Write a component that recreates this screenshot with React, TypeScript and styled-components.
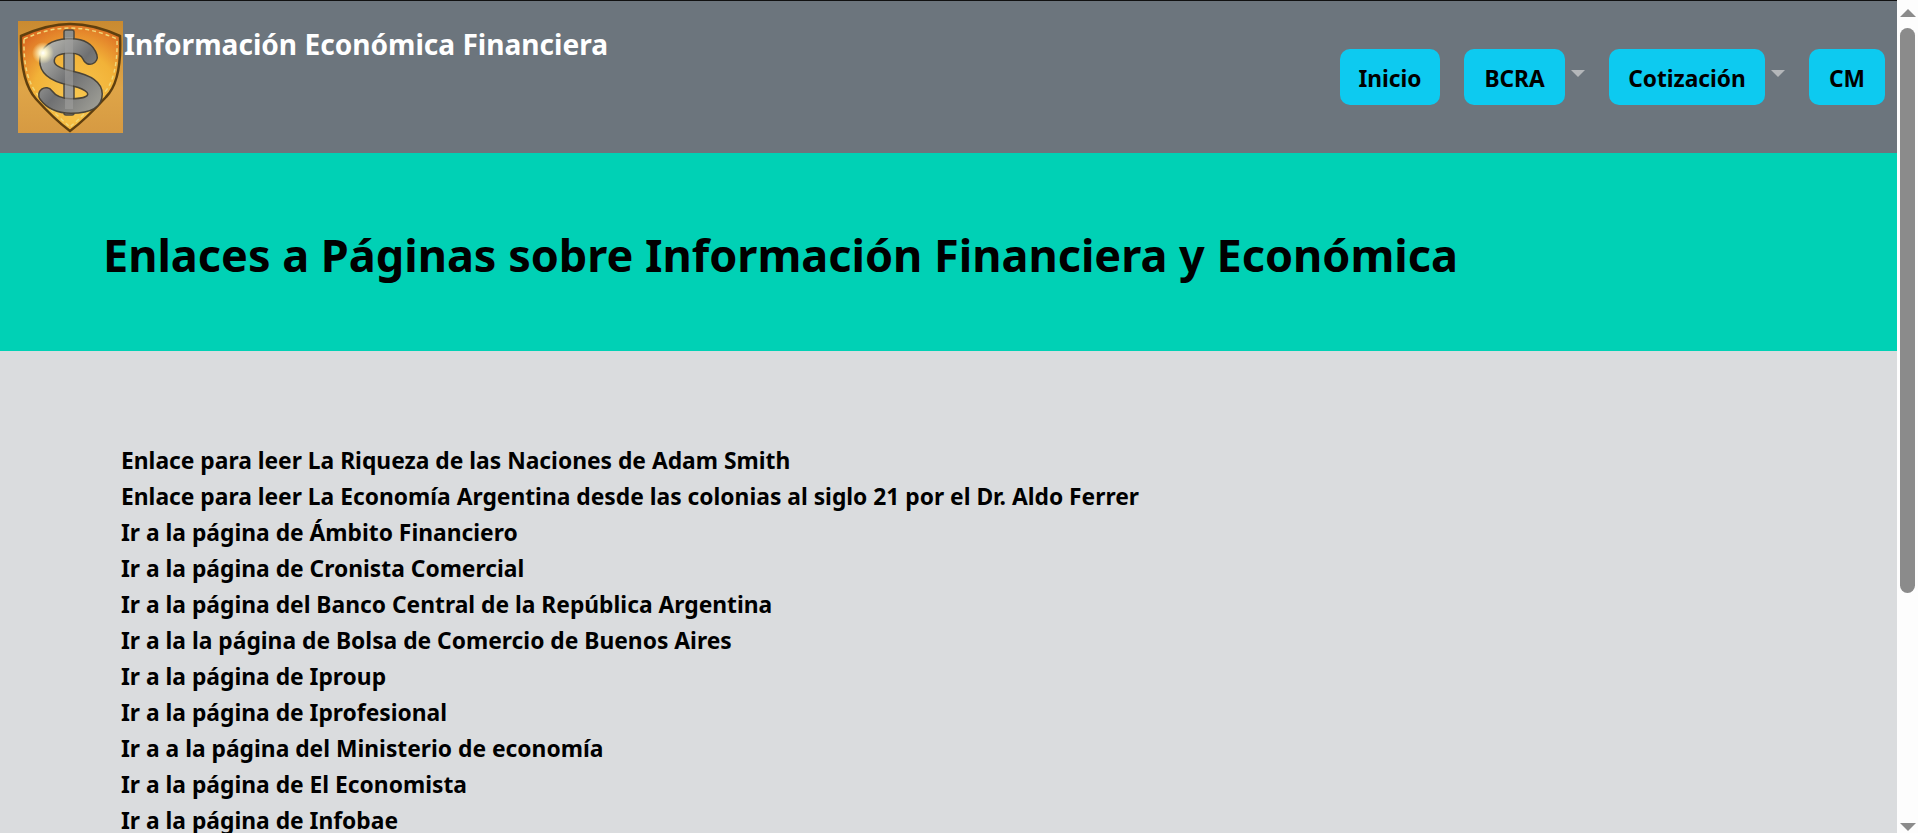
import * as React from "react";
import styled, { createGlobalStyle } from "styled-components";

const GlobalStyle = createGlobalStyle`
	html, body {
		margin: 0;
		height: 100%;
		overflow: hidden;
	}
	body {
		font-family: "Noto Sans", "Open Sans", "Liberation Sans", sans-serif;
		color: #000;
		background: #dadcde;
	}
`;

const Shell = styled.div`
	display: flex;
	height: 100vh;
	overflow: hidden;
`;

const Page = styled.div`
	flex: 1;
	min-width: 0;
	overflow: hidden;
`;

const Header = styled.header`
	display: flex;
	justify-content: space-between;
	height: 152px;
	border-top: 1px solid #111;
	background: #6c757d;
`;

const Brand = styled.div`
	display: flex;
	align-items: flex-start;
	padding: 20px 0 0 18px;
`;

const BrandTitle = styled.span`
	margin: 5px 0 0 1px;
	font-size: 28.1px;
	font-weight: 700;
	line-height: 36px;
	color: #fff;
`;

const Nav = styled.nav`
	display: flex;
	align-items: flex-start;
	padding: 48px 12px 0 0;
`;

const NavItem = styled.div`
	display: flex;
	align-items: flex-start;
	margin-left: 24px;
`;

const NavButton = styled.a<{ $width: number }>`
	display: flex;
	align-items: center;
	justify-content: center;
	box-sizing: border-box;
	width: ${(p) => p.$width}px;
	height: 56px;
	padding-top: 2px;
	border-radius: 10px;
	background: #0dcaf0;
	font-size: 22.7px;
	font-weight: 700;
	color: #000;
`;

const Caret = styled.span`
	width: 0;
	height: 0;
	margin: 21px 0 0 6px;
	border-top: 7px solid #b4b7ba;
	border-left: 7px solid transparent;
	border-right: 7px solid transparent;
`;

const Banner = styled.section`
	display: flex;
	align-items: center;
	height: 198px;
	padding: 6px 0 0 103px;
	box-sizing: border-box;
	background: #00d1b5;
`;

const BannerTitle = styled.h1`
	margin: 0;
	font-size: 45px;
	font-weight: 700;
	line-height: 60px;
`;

const Links = styled.ul`
	margin: 0;
	padding: 92px 0 0 121px;
	list-style: none;
`;

const LinkRow = styled.li`
	font-size: 22.8px;
	font-weight: 700;
	line-height: 36px;
	white-space: nowrap;
`;

const Scrollbar = styled.div`
	display: flex;
	flex-direction: column;
	align-items: center;
	flex: 0 0 21px;
	background: #fdfdfd;
`;

const ArrowUp = styled.span`
	width: 0;
	height: 0;
	margin-top: 9px;
	border-bottom: 8px solid #8b8b8b;
	border-left: 8px solid transparent;
	border-right: 8px solid transparent;
`;

const Thumb = styled.div`
	width: 15px;
	height: 565px;
	margin-top: 11px;
	border-radius: 8px;
	background: #8b8b8b;
`;

const ArrowDown = styled.span`
	width: 0;
	height: 0;
	margin-top: auto;
	margin-bottom: 2px;
	border-top: 8px solid #8b8b8b;
	border-left: 8px solid transparent;
	border-right: 8px solid transparent;
`;

const signo = "M72 36 Q68 24 50 25 Q29 26 29 40 Q29 52 52 57 Q77 62 77 73 Q77 85 53 85 Q36 85 28 74";

// escudo con el signo pesos, dibujado porque no hay archivo de imagen
function Logo() {
	return (
		<svg width="105" height="112" viewBox="0 0 105 112">
			<defs>
				<linearGradient id="tan" x1="0" y1="0" x2="0" y2="1">
					<stop offset="0" stopColor="#c98a30" />
					<stop offset="0.6" stopColor="#dfa548" />
					<stop offset="1" stopColor="#d69a42" />
				</linearGradient>
				<radialGradient id="gold" cx="0.55" cy="0.7" r="0.8">
					<stop offset="0" stopColor="#f8c850" />
					<stop offset="0.55" stopColor="#f2b238" />
					<stop offset="1" stopColor="#d9601f" />
				</radialGradient>
				<linearGradient id="steel" x1="0" y1="0" x2="1" y2="1">
					<stop offset="0" stopColor="#b4b4ae" />
					<stop offset="0.5" stopColor="#6f7072" />
					<stop offset="1" stopColor="#9a9a93" />
				</linearGradient>
				<radialGradient id="spark">
					<stop offset="0" stopColor="#fff" />
					<stop offset="0.3" stopColor="#fff8d0" stopOpacity="0.95" />
					<stop offset="1" stopColor="#fff2b0" stopOpacity="0" />
				</radialGradient>
			</defs>
			<rect width="105" height="112" fill="url(#tan)" />
			<path
				d="M3 15 Q30 3 52 3 Q76 3 102 15 Q104 60 88 76 Q68 98 52 110 Q36 98 18 78 Q2 60 3 15Z"
				fill="url(#gold)"
				stroke="#5f3f0e"
				strokeWidth="2.5"
			/>
			<path
				d="M6 18 Q30 7 52 7 Q74 7 99 18 Q100 58 85 73 Q66 94 52 106 Q38 94 21 75 Q5 58 6 18Z"
				fill="none"
				stroke="#f0d878"
				strokeWidth="1.5"
				strokeDasharray="4 3"
			/>
			<rect x="46" y="9" width="10" height="85" rx="2" fill="#8d8e8c" stroke="#4e4a40" strokeWidth="1.5" />
			<path d={signo} fill="none" stroke="#4a4438" strokeWidth="16" strokeLinecap="round" />
			<path d={signo} fill="none" stroke="url(#steel)" strokeWidth="13" strokeLinecap="round" />
			<rect x="47" y="16" width="8" height="72" fill="#a2a3a0" opacity="0.55" />
			<circle cx="25" cy="32" r="11" fill="url(#spark)" />
		</svg>
	);
}

const enlaces = [
	"Enlace para leer La Riqueza de las Naciones de Adam Smith",
	"Enlace para leer La Economía Argentina desde las colonias al siglo 21 por el Dr. Aldo Ferrer",
	"Ir a la página de Ámbito Financiero",
	"Ir a la página de Cronista Comercial",
	"Ir a la página del Banco Central de la República Argentina",
	"Ir a la la página de Bolsa de Comercio de Buenos Aires",
	"Ir a la página de Iproup",
	"Ir a la página de Iprofesional",
	"Ir a a la página del Ministerio de economía",
	"Ir a la página de El Economista",
	"Ir a la página de Infobae",
];

export default function App() {
	return (
		<Shell>
			<GlobalStyle />
			<Page>
				<Header>
					<Brand>
						<Logo />
						<BrandTitle>Información Económica Financiera</BrandTitle>
					</Brand>
					<Nav>
						<NavItem>
							<NavButton $width={100}>Inicio</NavButton>
						</NavItem>
						<NavItem>
							<NavButton $width={101}>BCRA</NavButton>
							<Caret />
						</NavItem>
						<NavItem>
							<NavButton $width={156}>Cotización</NavButton>
							<Caret />
						</NavItem>
						<NavItem>
							<NavButton $width={76}>CM</NavButton>
						</NavItem>
					</Nav>
				</Header>
				<Banner>
					<BannerTitle>Enlaces a Páginas sobre Información Financiera y Económica</BannerTitle>
				</Banner>
				<Links>
					{enlaces.map((texto) => (
						<LinkRow key={texto}>{texto}</LinkRow>
					))}
				</Links>
			</Page>
			<Scrollbar>
				<ArrowUp />
				<Thumb />
				<ArrowDown />
			</Scrollbar>
		</Shell>
	);
}
